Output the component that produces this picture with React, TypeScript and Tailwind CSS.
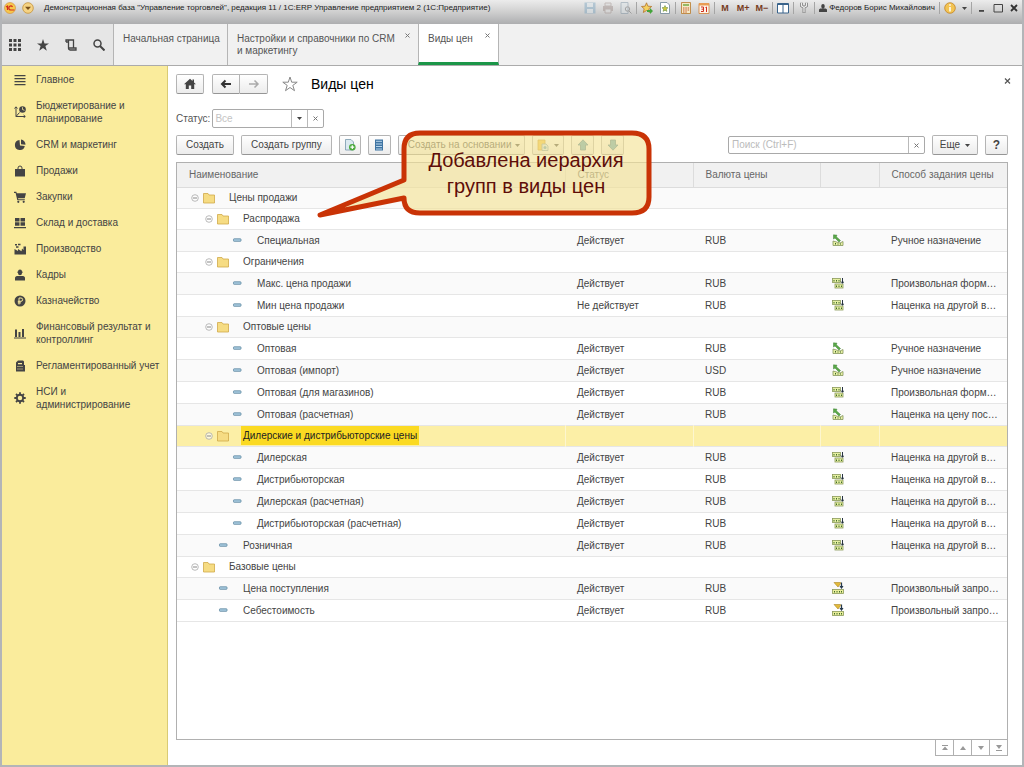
import { useState } from 'react';
import type { ReactNode } from 'react';

type Method = 'manual' | 'formula' | 'query';

interface PriceRow {
  name: string;
  level: number;
  folder?: boolean;
  status?: string;
  currency?: string;
  method?: Method;
  methodText?: string;
}

const ROWS: PriceRow[] = [
  { name: 'Цены продажи', level: 0, folder: true },
  { name: 'Распродажа', level: 1, folder: true },
  { name: 'Специальная', level: 2, status: 'Действует', currency: 'RUB', method: 'manual', methodText: 'Ручное назначение' },
  { name: 'Ограничения', level: 1, folder: true },
  { name: 'Макс. цена продажи', level: 2, status: 'Действует', currency: 'RUB', method: 'formula', methodText: 'Произвольная форм…' },
  { name: 'Мин цена продажи', level: 2, status: 'Не действует', currency: 'RUB', method: 'formula', methodText: 'Наценка на другой в…' },
  { name: 'Оптовые цены', level: 1, folder: true },
  { name: 'Оптовая', level: 2, status: 'Действует', currency: 'RUB', method: 'manual', methodText: 'Ручное назначение' },
  { name: 'Оптовая (импорт)', level: 2, status: 'Действует', currency: 'USD', method: 'manual', methodText: 'Ручное назначение' },
  { name: 'Оптовая (для магазинов)', level: 2, status: 'Действует', currency: 'RUB', method: 'formula', methodText: 'Произвольная форм…' },
  { name: 'Оптовая (расчетная)', level: 2, status: 'Действует', currency: 'RUB', method: 'manual', methodText: 'Наценка на цену пос…' },
  { name: 'Дилерские и дистрибьюторские цены', level: 1, folder: true },
  { name: 'Дилерская', level: 2, status: 'Действует', currency: 'RUB', method: 'formula', methodText: 'Наценка на другой в…' },
  { name: 'Дистрибьюторская', level: 2, status: 'Действует', currency: 'RUB', method: 'formula', methodText: 'Наценка на другой в…' },
  { name: 'Дилерская (расчетная)', level: 2, status: 'Действует', currency: 'RUB', method: 'formula', methodText: 'Наценка на другой в…' },
  { name: 'Дистрибьюторская (расчетная)', level: 2, status: 'Действует', currency: 'RUB', method: 'formula', methodText: 'Наценка на другой в…' },
  { name: 'Розничная', level: 1, status: 'Действует', currency: 'RUB', method: 'formula', methodText: 'Наценка на другой в…' },
  { name: 'Базовые цены', level: 0, folder: true },
  { name: 'Цена поступления', level: 1, status: 'Действует', currency: 'RUB', method: 'query', methodText: 'Произвольный запро…' },
  { name: 'Себестоимость', level: 1, status: 'Действует', currency: 'RUB', method: 'query', methodText: 'Произвольный запро…' },
];

const INDENT = ['pl-[14px]', 'pl-[28px]', 'pl-[42px]'];

const BTN =
  'flex items-center justify-center rounded-xs border border-[#b4b4b4] border-b-[#959595] bg-linear-to-b from-white to-[#ececec] text-[#444]';

/* Sidebar icons, all on a 12x12 grid */
const SECTIONS: { label: string; icon: ReactNode }[] = [
  { label: 'Главное', icon: <path d="M.5 1h11v1.300H.5zM.5 4h11v1.300H.5zM.5 7h11v1.300H.5zM.5 10h11v1.300H.5z" /> },
  {
    label: 'Бюджетирование и\nпланирование',
    icon: (
      <>
        <path d="M2 1v9.500h9M.5 2.500L2 .8l1.500 1.700M9.600 9l1.700 1.500-1.700 1.300M2 10.500l3.500-4" fill="none" stroke="#444" />
        <circle cx="8.500" cy="3.500" r="3.300" />
        <path d="M8.500 3.500V1.200M8.500 3.500l2 .8" stroke="#faec9c" strokeWidth=".8" />
      </>
    ),
  },
  { label: 'CRM и маркетинг', icon: <path d="M5.500 1a5 5 0 1 0 5.300 6L6 6.500zM7 .6v4.700l4.500.5A5 5 0 0 0 7 .6z" /> },
  {
    label: 'Продажи',
    icon: (
      <>
        <path d="M1 4h10v7.500H1z" />
        <path d="M4 5.500V3a2 2 0 0 1 4 0v2.500" fill="none" stroke="#444" />
      </>
    ),
  },
  {
    label: 'Закупки',
    icon: (
      <>
        <path d="M0 .8h2.300l.5 1.400H12l-1.300 5H4l.3 1.100h6.500v1H3.300L1.600 1.900H0z" />
        <circle cx="4.300" cy="10.800" r="1.100" />
        <circle cx="9.700" cy="10.800" r="1.100" />
      </>
    ),
  },
  { label: 'Склад и доставка', icon: <path d="M1 1h4.500v3.500H1zM6.500 1H11v3.500H6.500zM1 5.300h4.500v3.500H1zM6.500 5.300H11v3.500H6.500zM0 10h12v1.300H0z" /> },
  { label: 'Производство', icon: <path d="M.5 11.500V6L4 8V6l3.500 2.200L8 5.500 9.500 7V3.500H12v8zM1 1h2v1.500H1zM4 .8h2.500v1.500H4zM2 3.300h2.500v1.500H2z" /> },
  { label: 'Кадры', icon: <path d="M4 2.500A2 2 0 0 1 8 2.500v1.800a2 2 0 0 1-4 0zM3 2.800h6v.8H3zM1 11.500V9c0-1.400 1.400-2 3-2h4c1.600 0 3 .6 3 2v2.500z" /> },
  {
    label: 'Казначейство',
    icon: (
      <>
        <circle cx="6" cy="6" r="5.500" />
        <path d="M5 9.500V3h2a1.600 1.600 0 0 1 0 3.300H3.800M3.800 7.900H7" fill="none" stroke="#faec9c" />
      </>
    ),
  },
  { label: 'Финансовый результат и\nконтроллинг', icon: <path d="M1 2.500h2V10H1zM4.500 5h2v5h-2zM8 2h2v8H8zM0 10.500h12v1H0z" /> },
  {
    label: 'Регламентированный учет',
    icon: (
      <>
        <path d="M2 11.500V2.500L4 .5h5l1 1V5h1v6.500z" />
        <path d="M4 3h4v1.300H4zM3.500 6h1v1h-1zM5.500 6h1v1h-1zM7.500 6h1v1h-1zM3.500 8.500h1v1h-1zM5.500 8.500h1v1h-1zM7.500 8.500h1v1h-1z" fill="#faec9c" />
      </>
    ),
  },
  {
    label: 'НСИ и\nадминистрирование',
    icon: (
      <>
        <circle cx="6" cy="6" r="3.200" fill="none" stroke="#444" strokeWidth="1.900" />
        <path d="M6 .3v2M6 9.700v2M.3 6h2M9.700 6h2M2 2l1.400 1.400M8.600 8.600L10 10M2 10l1.400-1.400M8.600 3.400L10 2" stroke="#444" strokeWidth="1.800" />
      </>
    ),
  },
];

function Icon({ size = 12, className = '', children }: { size?: 8 | 12 | 16; className?: string; children: ReactNode }) {
  return (
    <svg viewBox={`0 0 ${size} ${size}`} width={size} height={size} className={`shrink-0 ${className}`} fill="#444" aria-hidden="true">
      {children}
    </svg>
  );
}

function Caret() {
  return (
    <svg viewBox="0 0 5 3" width="5" height="3" className="shrink-0" aria-hidden="true">
      <path d="M0 0h5L2.500 3z" fill="#444" />
    </svg>
  );
}

function Cross() {
  return (
    <svg viewBox="0 0 5 5" width="5" height="5" className="shrink-0" aria-hidden="true">
      <path d="M.5.5l4 4M4.500.5l-4 4" stroke="#777" />
    </svg>
  );
}

function Ruler({ x, y }: { x: number; y: number }) {
  return (
    <>
      <rect x={x + 0.5} y={y + 0.5} width="8" height="4" fill="#e6efa0" stroke="#8b9a5a" strokeWidth=".8" />
      <path d={`M${x + 2} ${y + 3.5}v-1.500M${x + 4.5} ${y + 3.5}v-1.500M${x + 7} ${y + 3.5}v-1.500`} stroke="#3f6b2a" />
    </>
  );
}

function MethodIcon({ method }: { method: Method }) {
  return (
    <Icon>
      {method === 'manual' && (
        <>
          <path d="M1 7v4.500h10V7.500L8 9z" fill="#e8f0a6" stroke="#84955a" strokeWidth=".8" />
          <path d="M3.500 10.500V9M6 10.500V9.500M8.500 10.500V9.500" stroke="#3d6627" />
          <path d="M1.500.8L5 1.200 4.300 2.700 8.500 6.500 7 8 3 4 1.500 5z" fill="#5aa948" stroke="#3d8132" strokeWidth=".5" />
        </>
      )}
      {method === 'formula' && (
        <>
          <Ruler x={0} y={1} />
          <Ruler x={2.5} y={6.5} />
          <path d="M10.500 1v5M9 4.500l1.500 1.800L12 4.500" fill="none" stroke="#263340" />
        </>
      )}
      {method === 'query' && (
        <>
          <path d="M2 .5h6.500v1.200L6 5z" fill="#e3ba3a" stroke="#aa8424" strokeWidth=".6" />
          <path d="M9.500.5v5M8 4l1.500 2L11 4" fill="none" stroke="#24384c" strokeWidth="1.200" />
          <rect x=".5" y="7.500" width="11" height="4" fill="#e9ee9a" stroke="#8b9a5a" strokeWidth=".8" />
          <path d="M2.500 10.500V9M5 10.500V9M7.500 10.500V9M9.500 10.500V9" stroke="#3f6b2a" />
        </>
      )}
    </Icon>
  );
}

function Separator() {
  return <span className="-mx-[2px] h-3 w-px bg-[#a5a5a5]" />;
}

function TitleBar() {
  return (
    <header className="flex h-6 items-start justify-between bg-linear-to-b from-[#ececec] via-[#cfcfcf] to-[#adaeb0] pr-[2px] pl-[2px] text-[8px] text-[#222]">
      <div className="flex h-4 items-center gap-[6px]">
        <Icon>
          <circle cx="6" cy="6" r="5.500" fill="#f6c84c" stroke="#d28c3c" strokeWidth=".6" />
          <path d="M2 5l1.500-1v4M8.500 5A2 2 0 1 0 7 8h3.500" fill="none" stroke="#d32c1c" strokeWidth="1.200" />
        </Icon>
        <button aria-label="Главное меню">
          <Icon>
            <circle cx="6" cy="6" r="5.300" fill="#f5d384" stroke="#c59238" strokeWidth=".8" />
            <path d="M3 4.800h6L6 8z" fill="#79511c" />
          </Icon>
        </button>
        <h1 className="pl-[4px] whitespace-nowrap">Демонстрационная база "Управление торговлей", редакция 11 / 1С:ERP Управление предприятием 2 (1С:Предприятие)</h1>
      </div>
      <div className="flex h-4 items-center gap-[6px]">
        <Icon className="opacity-40">
          <path d="M.5.5h11v11H.5z" fill="#6d9dbd" />
          <path d="M3 1h6v4H3zM3 7h6v4H3z" fill="#dbe7ee" />
        </Icon>
        <Icon className="opacity-40">
          <path d="M1 4h10v5H1z" fill="#93807a" />
          <path d="M3 1h6v3H3zM3 7h6v4H3z" fill="#ddd" stroke="#93807a" />
        </Icon>
        <Icon className="opacity-40">
          <path d="M1 .5h7v11H1z" fill="#dbe4ea" stroke="#6c8598" />
          <circle cx="7.500" cy="7" r="2.200" fill="none" stroke="#555" />
          <path d="M9 9l2.500 2.500" stroke="#555" />
        </Icon>
        <Separator />
        <Icon>
          <path d="M5.500.8l1.400 3.400 3.800.3-2.900 2.300.9 3.700-3.200-2-3.200 2 .9-3.700L.5 4.500l3.600-.3z" fill="#f5d160" stroke="#b5752c" strokeWidth=".8" />
          <path d="M6 8h3V6l3 3-3 3v-2H6z" fill="#43a43b" />
        </Icon>
        <Icon>
          <path d="M1.500.5H8L10.500 3v8.500h-9z" fill="#fff" stroke="#6f8796" strokeWidth=".8" />
          <path d="M6 3.500l.9 2 2.100.2-1.600 1.500.5 2.200L6 8.200 4.100 9.400l.5-2.200L3 5.700l2.100-.2z" fill="#d0c93b" stroke="#52823c" strokeWidth=".5" />
        </Icon>
        <Separator />
        <Icon>
          <path d="M1.500.5h9v11h-9z" fill="#f5e9c4" stroke="#b7782a" strokeWidth=".8" />
          <path d="M3 2h6v2H3z" fill="#94b965" />
          <path d="M3 6h1.500M5.300 6h1.500M7.600 6h1.500M3 8h1.500M5.300 8h1.500M7.600 8h1.500M3 10h1.500M5.300 10h1.500" stroke="#c4562c" />
        </Icon>
        <Icon>
          <path d="M1 1.500h10v10H1z" fill="#fff4e8" stroke="#d08239" strokeWidth=".8" />
          <path d="M1 1h10v2.500H1z" fill="#e99b52" />
          <path d="M3 5h2.500v4.500H3M3.500 7.200h2M7.500 5.500L8.500 5v5" fill="none" stroke="#d12f1e" />
        </Icon>
        <Separator />
        <div className="flex gap-[6px] text-[9px] font-bold text-[#773b1c]">
          <button className="px-[2px]">M</button>
          <button>M+</button>
          <button>M−</button>
        </div>
        <Separator />
        <Icon>
          <path d="M.5 1.500h11v9.500H.5z" fill="#fff" stroke="#38638b" />
          <path d="M1 2.500h10M6 2v9" stroke="#38638b" />
        </Icon>
        <Separator />
        {/* wrench */}
        <Icon>
          <path d="M3.500.8v3L6 5.500l2.500-1.700v-3M6 5.500V11" fill="none" stroke="#777" strokeWidth="2.800" />
          <path d="M3.500.8v3L6 5.500l2.500-1.700v-3M6 5.500V10.500" fill="none" stroke="#eee" strokeWidth="1.300" />
        </Icon>
        <Separator />
        <span className="flex items-center gap-[2px] whitespace-nowrap">
          <Icon size={8}>
            <path d="M2.300 1.800a1.700 1.700 0 0 1 3.400 0v1a1.700 1.700 0 0 1-3.400 0zM0 8V6c0-1 1-1.500 2-1.500h4c1 0 2 .5 2 1.500v2z" />
          </Icon>
          Федоров Борис Михайлович
        </span>
        <Separator />
        <Icon>
          <circle cx="6" cy="6" r="5.300" fill="#f3c453" stroke="#c18427" strokeWidth=".8" />
          <path d="M6 2.300v1.500M6 5v4.500" stroke="#fff" strokeWidth="1.500" />
        </Icon>
        <Caret />
        <Separator />
        <div className="flex gap-1">
          <button aria-label="Свернуть">
            <Icon><path d="M3 8h5v1.800H3z" /></Icon>
          </button>
          <button aria-label="Развернуть">
            <Icon><path d="M2 2.500h8.500V10H2z" fill="none" stroke="#444" /></Icon>
          </button>
          <button aria-label="Закрыть окно">
            <Icon><path d="M3 3l6 6M9 3L3 9" stroke="#333" strokeWidth="1.800" /></Icon>
          </button>
        </div>
      </div>
    </header>
  );
}

function TopNav() {
  return (
    <nav className="flex h-[42px] border-b border-[#ababab] bg-[#f1f1f1] text-[#555]">
      <div className="flex w-[111px] items-center justify-between bg-[#e6e6e6] pr-2 pl-[7px]">
        <button aria-label="Разделы">
          <Icon><path d="M0 0h3v3H0zM4.500 0h3v3h-3zM9 0h3v3H9zM0 4.500h3v3H0zM4.500 4.500h3v3h-3zM9 4.500h3v3H9zM0 9h3v3H0zM4.500 9h3v3h-3zM9 9h3v3H9z" /></Icon>
        </button>
        <button aria-label="Избранное">
          <Icon><path d="M6 0l1.500 4.400H12L8.400 7.100l1.400 4.600L6 9l-3.800 2.700 1.400-4.600L0 4.400h4.500z" /></Icon>
        </button>
        <button aria-label="История">
          <Icon><path d="M3.500 9V1.500M1 3V1h7.500v8.500M4 9h7v2H5c-1 0-1.500-.8-1.500-2M1 3h2.500" fill="none" stroke="#444" strokeWidth="1.300" /></Icon>
        </button>
        <button aria-label="Поиск">
          <Icon>
            <circle cx="4.500" cy="4.500" r="3.500" fill="none" stroke="#444" strokeWidth="1.500" />
            <path d="M7 7l4.500 4.500" stroke="#444" strokeWidth="2" />
          </Icon>
        </button>
      </div>
      <a href="#home" className="w-[114px] border-l border-[#b5b5b5] pt-[9px] pl-[9px] leading-3">Начальная страница</a>
      <div className="flex w-[191px] items-start justify-between border-l border-[#b5b5b5] pt-[9px] pr-2 pl-[9px] leading-3">
        <a href="#settings" className="whitespace-nowrap">
          Настройки и справочники по CRM
          <br />
          и маркетингу
        </a>
        <button aria-label="Закрыть вкладку" className="shrink-0"><Cross /></button>
      </div>
      <div className="flex w-[81px] items-start justify-between border-x border-b-[3px] border-x-[#b5b5b5] border-b-[#1b9648] bg-white pt-[9px] pr-2 pl-[9px] leading-3">
        <a href="#prices">Виды цен</a>
        <button aria-label="Закрыть вкладку"><Cross /></button>
      </div>
    </nav>
  );
}

function Sidebar() {
  return (
    <aside className="w-[166px] shrink-0 border-r border-[#d9cb74] bg-[#faec9c] pt-[7px]">
      <ul className="flex flex-col gap-[13px]">
        {SECTIONS.map((s) => (
          <li key={s.label}>
            <a href="#section" className="flex items-center gap-[10px] pl-3 leading-[13px] text-[#444]">
              <Icon>{s.icon}</Icon>
              <span className="whitespace-pre">{s.label}</span>
            </a>
          </li>
        ))}
      </ul>
    </aside>
  );
}

function Toolbar() {
  return (
    <div className="mt-[7px] flex h-5 items-stretch gap-[7px]">
      <button className={`${BTN} px-[9px]`}>Создать</button>
      <button className={`${BTN} px-[9px]`}>Создать группу</button>
      <button className={`${BTN} w-[22px]`} aria-label="Скопировать">
        <Icon>
          <path d="M1.500.5H7L9.500 3v8h-8z" fill="#dbe9f0" stroke="#7798ac" strokeWidth=".8" />
          <circle cx="8.300" cy="8.200" r="3.300" fill="#4caa3f" />
          <path d="M8.300 6.300v3.800M6.400 8.200h3.800" stroke="#fff" strokeWidth="1.200" />
        </Icon>
      </button>
      <button className={`${BTN} w-[23px]`} aria-label="Список">
        <Icon>
          <path d="M2 .5h8v11H2z" fill="#3f74a3" />
          <path d="M3 2.300h6M3 5h6M3 7.500h6M3 10h6" stroke="#b9d6ec" />
        </Icon>
      </button>
      <button className={`${BTN} gap-1 pr-1 pl-[9px]`}>Создать на основании <Caret /></button>
      <button className={`${BTN} w-[32px] gap-[5px]`} aria-label="Отчеты">
        <Icon>
          <path d="M1 1h7v10H1z" fill="#f3c23c" stroke="#c69224" strokeWidth=".8" />
          <path d="M5 5h4l2 2v4.500H5z" fill="#dceaf2" stroke="#7295ad" strokeWidth=".8" />
          <circle cx="8" cy="8.500" r="1.500" fill="#5a9ac2" />
        </Icon>
        <Caret />
      </button>
      <button className={`${BTN} w-[23px]`} aria-label="Вверх">
        <Icon><path d="M6 .8L11 6H8.500v5h-5V6H1z" fill="#58a0bd" stroke="#3c748f" strokeWidth=".8" /></Icon>
      </button>
      <button className={`${BTN} w-[23px]`} aria-label="Вниз">
        <Icon><path d="M6 11.200L1 6h2.500V1h5v5H11z" fill="#58a0bd" stroke="#3c748f" strokeWidth=".8" /></Icon>
      </button>
      <div className="my-px ml-auto flex w-[197px] rounded-xs border border-[#a9a9a9] bg-white">
        <input aria-label="Поиск" placeholder="Поиск (Ctrl+F)" className="min-w-0 flex-1 px-[3px] outline-none placeholder:text-[#bbb]" />
        <button aria-label="Очистить поиск" className="flex w-4 items-center justify-center border-l border-[#b9b9b9]"><Cross /></button>
      </div>
      <button className={`${BTN} w-[46px] gap-[5px]`}>Еще <Caret /></button>
      <button className={`${BTN} w-[23px] text-xs font-bold`}>?</button>
    </div>
  );
}

function PriceTable() {
  const [selected, setSelected] = useState(11);

  return (
    <table className="w-full table-fixed border-collapse text-left text-[#444]">
      <colgroup>
        <col />
        <col className="w-[128px]" />
        <col className="w-[127px]" />
        <col className="w-[59px]" />
        <col className="w-[128px]" />
      </colgroup>
      <thead>
        <tr className="h-[24px] border-b border-[#dcdcdc] bg-[#f1f1f1] text-[#666]">
          <th className="pl-3 font-normal">Наименование</th>
          <th className="border-l border-[#dcdcdc] pl-3 font-normal">Статус</th>
          <th className="border-l border-[#dcdcdc] pl-3 font-normal">Валюта цены</th>
          <th className="border-l border-[#dcdcdc]" />
          <th className="border-l border-[#dcdcdc] pl-3 font-normal whitespace-nowrap">Способ задания цены</th>
        </tr>
      </thead>
      <tbody>
        {ROWS.map((row, i) => {
          const active = i === selected;
          const cell = `pl-3 leading-[19px] whitespace-nowrap ${active ? 'border-l border-[#fdf6cf]' : ''}`;
          return (
            <tr
              key={row.name}
              onClick={() => setSelected(i)}
              className={`border-b border-[#e6e6e6] ${row.folder ? 'h-[21px]' : 'h-[22px]'} ${active ? 'bg-[#fcefa6]' : i % 2 ? 'bg-white' : 'bg-[#fafafa]'}`}
            >
              <td>
                <div className={`flex items-center whitespace-nowrap ${INDENT[row.level]}`}>
                  <span className="flex w-[12px]">
                    {row.folder && (
                      <button aria-label="Свернуть группу">
                        <Icon size={8}>
                          <circle cx="4" cy="4" r="3.300" fill="#fff" fillOpacity=".6" stroke="#aaa" strokeWidth=".8" />
                          <path d="M2 4h4" stroke="#888" />
                        </Icon>
                      </button>
                    )}
                  </span>
                  <Icon>
                    {row.folder ? (
                      <path d="M.5 1.500h4.500l1 1.500h5.500v8H.5z" fill="#f6dc83" stroke="#d0aa4a" strokeWidth=".8" />
                    ) : (
                      <rect x="2.500" y="4.800" width="7.500" height="2.500" rx=".6" fill="#a8cbe0" stroke="#5d87a0" strokeWidth=".8" />
                    )}
                  </Icon>
                  <span className={`ml-3 px-[2px] leading-[19px] ${active ? 'bg-[#fbda22] text-[#222]' : ''}`}>{row.name}</span>
                </div>
              </td>
              <td className={cell}>{row.status}</td>
              <td className={cell}>{row.currency}</td>
              <td className={cell}>{row.method && <MethodIcon method={row.method} />}</td>
              <td className={cell}>{row.methodText}</td>
            </tr>
          );
        })}
      </tbody>
    </table>
  );
}

function Callout() {
  return (
    <div className="pointer-events-none absolute top-[62px] left-[148px] h-[92px] w-[340px]">
      <svg viewBox="0 0 340 92" width="340" height="92" className="absolute inset-0" aria-hidden="true">
        <path
          d="M104 5H316Q333 5 333 21V69Q333 85 316 85H104Q88 85 88 70L4 87L88 52V21Q88 5 104 5z"
          fill="#f5e498"
          fillOpacity=".65"
          stroke="#c93306"
          strokeWidth="5"
          strokeLinejoin="round"
        />
      </svg>
      <p className="relative mr-1 ml-[84px] pt-[19px] text-center text-xl leading-[26px] text-[#5e0d08]">
        Добавлена иерархия
        <br />
        групп в виды цен
      </p>
    </div>
  );
}

const SCROLL_BUTTONS = [
  { label: 'В начало', d: 'M1 1h6v1H1zM4 2.500L7 6H1z' },
  { label: 'Страница вверх', d: 'M4 2l3 4H1z' },
  { label: 'Страница вниз', d: 'M1 2h6L4 6z' },
  { label: 'В конец', d: 'M1 1h6L4 5zM1 6h6v1H1z' },
];

export default function App() {
  return (
    <div className="flex min-h-screen flex-col border-r-2 border-b-2 border-l-2 border-[#b3b5b8] bg-white font-['Liberation_Sans',Arial,sans-serif] text-[10px] leading-3">
      <TitleBar />
      <TopNav />
      <div className="flex flex-1">
        <Sidebar />
        <main className="relative flex min-w-0 flex-1 flex-col pt-2 pr-[14px] pb-[9px] pl-2">
          <div className="flex h-5 items-center">
            <button className={`${BTN} h-5 w-7`} aria-label="Домой">
              <Icon><path d="M6 .8L0 6.300h1.800V11h3V7.500h2.400V11h3V6.300H12L10 4.400V1.500H8.500V3z" /></Icon>
            </button>
            <div className="ml-2 flex">
              <button className={`${BTN} h-5 w-7 rounded-r-none`} aria-label="Назад">
                <Icon><path d="M11 6H2M5.500 2.500L2 6l3.500 3.500" fill="none" stroke="#333" strokeWidth="2" /></Icon>
              </button>
              <button className={`${BTN} h-5 w-7 rounded-l-none border-l-0`} aria-label="Вперед">
                <Icon><path d="M1 6h9M6.500 2.500L10 6 6.500 9.500" fill="none" stroke="#aaa" strokeWidth="1.500" /></Icon>
              </button>
            </div>
            <button className="ml-[14px]" aria-label="В избранное">
              <Icon size={16}><path d="M8 1l1.700 5.200h5.500l-4.400 3.200 1.700 5.300L8 11.500l-4.500 3.200 1.700-5.300L.8 6.200h5.500z" fill="none" stroke="#888" /></Icon>
            </button>
            <h2 className="ml-[13px] text-sm text-black">Виды цен</h2>
            <button className="mb-[6px] ml-auto -mr-1" aria-label="Закрыть">
              <Icon size={8}><path d="M1 1.500l5 5M6 1.500l-5 5" stroke="#555" strokeWidth="1.200" /></Icon>
            </button>
          </div>

          <div className="mt-[15px] flex h-[19px] items-center gap-[2px]">
            <label htmlFor="status" className="text-[#555]">Статус:</label>
            <div className="flex h-[19px] w-[112px] rounded-xs border border-[#a9a9a9] bg-white">
              <input id="status" placeholder="Все" className="min-w-0 flex-1 px-[2px] outline-none placeholder:text-[#c4c4c4]" />
              <button aria-label="Выбрать статус" className="flex w-4 items-center justify-center border-l border-[#b9b9b9]"><Caret /></button>
              <button aria-label="Очистить статус" className="flex w-4 items-center justify-center border-l border-[#b9b9b9]"><Cross /></button>
            </div>
          </div>

          <Toolbar />

          <div className="mt-[7px] flex-1 border border-[#b0b0b0]">
            <PriceTable />
          </div>
          <div className="flex justify-end">
            {SCROLL_BUTTONS.map((b) => (
              <button key={b.label} aria-label={b.label} className="-ml-px flex h-4 w-[19px] items-center justify-center border border-t-0 border-[#b0b0b0]">
                <Icon size={8}><path d={b.d} fill="#999" /></Icon>
              </button>
            ))}
          </div>

          <Callout />
        </main>
      </div>
    </div>
  );
}
